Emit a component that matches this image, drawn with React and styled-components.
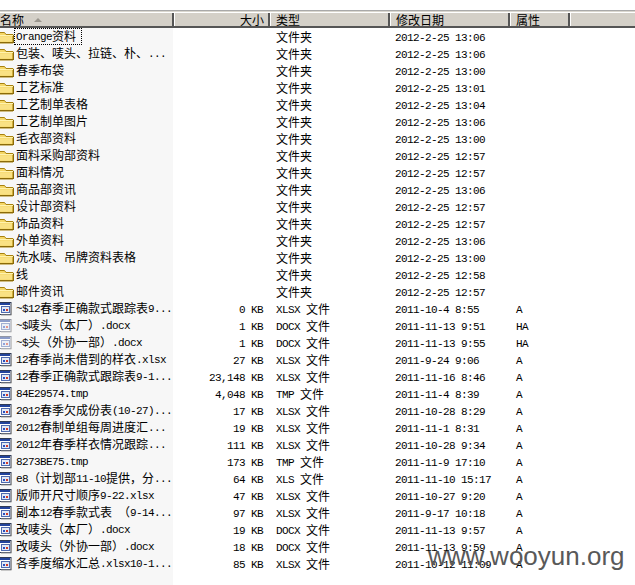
import React from 'react';
import styled, { createGlobalStyle } from 'styled-components';

const GlobalStyle = createGlobalStyle`
  html, body {
    margin: 0;
    padding: 0;
    background: #fff;
  }
`;

const Window = styled.div`
  position: relative;
  width: 635px;
  height: 585px;
  overflow: hidden;
  background: #fff;
  color: #000;
  font-family: "Noto Sans CJK SC", "Liberation Mono", monospace;
  font-size: 12px;
  padding-top: 10px;
  box-sizing: border-box;
`;

const TopRule = styled.div`
  height: 2px;
  margin-bottom: 1px;
  border-top: 1px solid #a9a9a9;
  background: #d9d6ce;
  box-sizing: border-box;
`;

const Header = styled.div`
  display: flex;
  height: 13px;
  background: #d4d0c8;
  border-bottom: 2px solid #555;
`;

const HeaderCell = styled.div`
  width: ${({ $w }) => $w}px;
  flex: none;
  box-sizing: border-box;
  display: flex;
  align-items: center;
  justify-content: ${({ $right }) => ($right ? 'flex-end' : 'flex-start')};
  padding: ${({ $right, $flush }) => ($right ? '0 4px 0 0' : $flush ? '0' : '0 0 0 6px')};
  border-right: 2px solid #555;
  box-shadow: 1px 0 0 #fff;
  line-height: 13px;
`;

const HeaderRest = styled.div`
  flex: 1;
`;

const SortArrow = styled.span`
  width: 0;
  height: 0;
  margin-left: 10px;
  border-left: 4px solid transparent;
  border-right: 4px solid transparent;
  border-bottom: 4px solid #9a968e;
`;

const List = styled.div`
  display: flex;
  flex-direction: column;
  background: linear-gradient(to right, #f7f7f7 173px, #fff 173px);
  height: 560px;
`;

const Row = styled.div`
  display: flex;
  height: 17px;
  box-sizing: border-box;
  padding-bottom: 1px;
  align-items: center;
  flex: none;
`;

const NameCell = styled.div`
  width: 173px;
  flex: none;
  display: flex;
  align-items: center;
  white-space: nowrap;
  overflow: hidden;
`;

const NameText = styled.span`
  display: block;
  line-height: 14px;
  padding: 0 ${({ $focused }) => ($focused ? '5px' : '1px')} 0 1px;
  border: 1px dotted ${({ $focused }) => ($focused ? '#000' : 'transparent')};
`;

const SizeCell = styled.div`
  width: 96px;
  flex: none;
  box-sizing: border-box;
  padding-right: 6px;
  text-align: right;
  white-space: pre;
`;

const TypeCell = styled.div`
  width: 120px;
  flex: none;
  box-sizing: border-box;
  padding-left: 7px;
  white-space: pre;
`;

const DateCell = styled.div`
  width: 120px;
  flex: none;
  box-sizing: border-box;
  padding-left: 6px;
  white-space: pre;
`;

const AttrCell = styled.div`
  flex: 1;
  padding-left: 7px;
  white-space: pre;
`;

const Latin = styled.span`
  font-family: "Liberation Mono", monospace;
  font-size: 11px;
  letter-spacing: -0.6px;
  vertical-align: 1px;
`;

const Icon = styled.svg`
  flex: none;
  opacity: ${({ $dim }) => ($dim ? 0.5 : 1)};
`;

const Watermark = styled.div`
  position: absolute;
  left: 428px;
  top: 540px;
  font-family: "Liberation Sans", sans-serif;
  font-size: 26px;
  line-height: 32px;
  color: #595959;
  white-space: nowrap;
`;

const folders = [
  ['Orange资料', '13:06'],
  ['包装、唛头、拉链、朴、...', '13:06'],
  ['春季布袋', '13:00'],
  ['工艺标准', '13:01'],
  ['工艺制单表格', '13:04'],
  ['工艺制单图片', '13:06'],
  ['毛衣部资料', '13:00'],
  ['面料采购部资料', '12:57'],
  ['面料情况', '12:57'],
  ['商品部资讯', '13:06'],
  ['设计部资料', '12:57'],
  ['饰品资料', '12:57'],
  ['外单资料', '13:06'],
  ['洗水唛、吊牌资料表格', '13:00'],
  ['线', '12:58'],
  ['邮件资讯', '12:57'],
];

const files = [
  ['~$12春季正确款式跟踪表9...', '0 KB', 'XLSX 文件', '2011-10-4 8:55', 'A', true],
  ['~$唛头（本厂）.docx', '1 KB', 'DOCX 文件', '2011-11-13 9:51', 'HA', false],
  ['~$头（外协一部）.docx', '1 KB', 'DOCX 文件', '2011-11-13 9:55', 'HA', false],
  ['12春季尚未借到的样衣.xlsx', '27 KB', 'XLSX 文件', '2011-9-24 9:06', 'A', true],
  ['12春季正确款式跟踪表9-1...', '23,148 KB', 'XLSX 文件', '2011-11-16 8:46', 'A', true],
  ['84E29574.tmp', '4,048 KB', 'TMP 文件', '2011-11-4 8:39', 'A', true],
  ['2012春季欠成份表(10-27)...', '17 KB', 'XLSX 文件', '2011-10-28 8:29', 'A', true],
  ['2012春制单组每周进度汇...', '19 KB', 'XLSX 文件', '2011-11-1 8:31', 'A', true],
  ['2012年春季样衣情况跟踪...', '111 KB', 'XLSX 文件', '2011-10-28 9:34', 'A', true],
  ['8273BE75.tmp', '173 KB', 'TMP 文件', '2011-11-9 17:10', 'A', true],
  ['e8（计划部11-10提供，分...', '64 KB', 'XLS 文件', '2011-11-10 15:17', 'A', true],
  ['版师开尺寸顺序9-22.xlsx', '47 KB', 'XLSX 文件', '2011-10-27 9:20', 'A', true],
  ['副本12春季款式表 （9-14...', '97 KB', 'XLSX 文件', '2011-9-17 10:18', 'A', true],
  ['改唛头（本厂）.docx', '19 KB', 'DOCX 文件', '2011-11-13 9:57', 'A', true],
  ['改唛头（外协一部）.docx', '18 KB', 'DOCX 文件', '2011-11-13 9:59', 'A', true],
  ['各季度缩水汇总.xlsx10-1...', '85 KB', 'XLSX 文件', '2011-10-12 11:09', 'A', true],
];

// ascii runs get a narrower face so they sit on a 6px grid like the cjk text's half width
const Mixed = ({ text }) =>
  text.split(/([\x20-\x7e]+)/).map((part, i) =>
    /^[\x20-\x7e]+$/.test(part) ? <Latin key={i}>{part}</Latin> : part
  );

const FolderIcon = () => (
  <Icon width="14" height="15" viewBox="0 0 14 15">
    <path d="M-2 3.5h6.5l1.5 2h7v8.5H-2z" fill="#f5d768" stroke="#a8820f" />
    <path d="M-1 6.5h14" stroke="#fff2ad" />
    <path d="M-1 7.5h13v5H-1z" fill="#f9e184" />
    <path d="M-2 13.5h15" stroke="#8a6a08" />
    <path d="M13.5 6v8" stroke="#8a6a08" />
  </Icon>
);

const FileIcon = ({ dim }) => (
  <Icon $dim={dim} width="14" height="15" viewBox="0 0 14 15">
    <rect x="-1" y="1.5" width="12" height="12" fill="#fff" stroke="#2f3a55" />
    <rect x="0" y="2" width="10" height="2" fill="#22439c" />
    <rect x="1.5" y="5.5" width="8" height="6" fill="#e3e9f5" stroke="#4f6bb0" />
    <rect x="3" y="8" width="2" height="2" fill="#2a4fc0" />
    <rect x="6" y="8" width="2" height="2" fill="#d23a2a" />
    <path d="M11.5 3v11H1" stroke="#9a9a9a" fill="none" />
  </Icon>
);

const DataRow = ({ icon, name, focused, size, type, date, attr }) => (
  <Row>
    <NameCell>
      {icon}
      <NameText $focused={focused}><Mixed text={name} /></NameText>
    </NameCell>
    <SizeCell><Mixed text={size} /></SizeCell>
    <TypeCell><Mixed text={type} /></TypeCell>
    <DateCell><Mixed text={date} /></DateCell>
    <AttrCell><Mixed text={attr} /></AttrCell>
  </Row>
);

export default function App() {
  return (
    <>
      <GlobalStyle />
      <Window>
        <TopRule />
        <Header>
          <HeaderCell $w={174} $flush>名称<SortArrow /></HeaderCell>
          <HeaderCell $w={96} $right>大小</HeaderCell>
          <HeaderCell $w={120}>类型</HeaderCell>
          <HeaderCell $w={120}>修改日期</HeaderCell>
          <HeaderCell $w={60}>属性</HeaderCell>
          <HeaderRest />
        </Header>
        <List>
          {folders.map(([name, time], i) => (
            <DataRow
              key={name}
              icon={<FolderIcon />}
              name={name}
              focused={i === 0}
              size=""
              type="文件夹"
              date={`2012-2-25 ${time}`}
              attr=""
            />
          ))}
          {files.map(([name, size, type, date, attr, solid]) => (
            <DataRow
              key={name}
              icon={<FileIcon dim={!solid} />}
              name={name}
              size={size}
              type={type}
              date={date}
              attr={attr}
            />
          ))}
        </List>
        <Watermark>www.wooyun.org</Watermark>
      </Window>
    </>
  );
}
